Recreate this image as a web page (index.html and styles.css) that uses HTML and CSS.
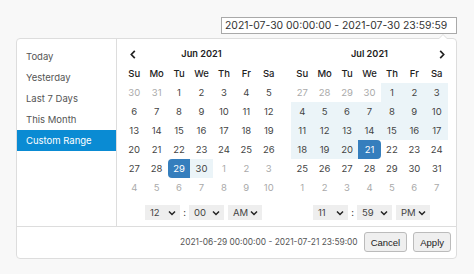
FILE: index.html
```html
<!DOCTYPE html>
<html>
<head>
<meta charset="utf-8">
<link rel="stylesheet" href="styles.css">
</head>
<body>
<div class="page">
  <div class="field-row"><div class="field">2021-07-30 00:00:00 - 2021-07-30 23:59:59</div></div>
  <div class="picker">
    <div class="picker-main">
      <ul class="ranges">
        <li>Today</li>
        <li>Yesterday</li>
        <li>Last 7 Days</li>
        <li>This Month</li>
        <li class="active">Custom Range</li>
      </ul>
      <div class="calendars">
        <div class="cal">
          <table>
            <thead>
              <tr class="month-row">
                <th class="nav prev"><svg width="6" height="9" viewBox="0 0 6 9"><path d="M4.8 0.8 L1.3 4.5 L4.8 8.2" fill="none" stroke="#222" stroke-width="1.7"/></svg></th>
                <th colspan="5" class="month">Jun 2021</th>
                <th></th>
              </tr>
              <tr class="dow"><th>Su</th><th>Mo</th><th>Tu</th><th>We</th><th>Th</th><th>Fr</th><th>Sa</th></tr>
            </thead>
            <tbody>
              <tr><td class="off">30</td><td class="off">31</td><td>1</td><td>2</td><td>3</td><td>4</td><td>5</td></tr>
              <tr><td>6</td><td>7</td><td>8</td><td>9</td><td>10</td><td>11</td><td>12</td></tr>
              <tr><td>13</td><td>14</td><td>15</td><td>16</td><td>17</td><td>18</td><td>19</td></tr>
              <tr><td>20</td><td>21</td><td>22</td><td>23</td><td>24</td><td>25</td><td>26</td></tr>
              <tr><td>27</td><td>28</td><td class="start">29</td><td class="in">30</td><td class="off">1</td><td class="off">2</td><td class="off">3</td></tr>
              <tr><td class="off">4</td><td class="off">5</td><td class="off">6</td><td class="off">7</td><td class="off">8</td><td class="off">9</td><td class="off">10</td></tr>
            </tbody>
          </table>
          <div class="time">
            <div class="sel"><span>12</span><svg width="8" height="6" viewBox="0 0 8 6"><path d="M1 1.5 L4 4.5 L7 1.5" fill="none" stroke="#222" stroke-width="1.5"/></svg></div>
            <span class="colon">:</span>
            <div class="sel"><span>00</span><svg width="8" height="6" viewBox="0 0 8 6"><path d="M1 1.5 L4 4.5 L7 1.5" fill="none" stroke="#222" stroke-width="1.5"/></svg></div>
            <div class="sel ampm"><span>AM</span><svg width="8" height="6" viewBox="0 0 8 6"><path d="M1 1.5 L4 4.5 L7 1.5" fill="none" stroke="#222" stroke-width="1.5"/></svg></div>
          </div>
        </div>
        <div class="cal">
          <table>
            <thead>
              <tr class="month-row">
                <th></th>
                <th colspan="5" class="month">Jul 2021</th>
                <th class="nav next"><svg width="6" height="9" viewBox="0 0 6 9"><path d="M1.2 0.8 L4.7 4.5 L1.2 8.2" fill="none" stroke="#222" stroke-width="1.7"/></svg></th>
              </tr>
              <tr class="dow"><th>Su</th><th>Mo</th><th>Tu</th><th>We</th><th>Th</th><th>Fr</th><th>Sa</th></tr>
            </thead>
            <tbody>
              <tr><td class="off">27</td><td class="off">28</td><td class="off">29</td><td class="off">30</td><td class="in">1</td><td class="in">2</td><td class="in">3</td></tr>
              <tr><td class="in">4</td><td class="in">5</td><td class="in">6</td><td class="in">7</td><td class="in">8</td><td class="in">9</td><td class="in">10</td></tr>
              <tr><td class="in">11</td><td class="in">12</td><td class="in">13</td><td class="in">14</td><td class="in">15</td><td class="in">16</td><td class="in">17</td></tr>
              <tr><td class="in">18</td><td class="in">19</td><td class="in">20</td><td class="end">21</td><td>22</td><td>23</td><td>24</td></tr>
              <tr><td>25</td><td>26</td><td>27</td><td>28</td><td>29</td><td>30</td><td>31</td></tr>
              <tr><td class="off">1</td><td class="off">2</td><td class="off">3</td><td class="off">4</td><td class="off">5</td><td class="off">6</td><td class="off">7</td></tr>
            </tbody>
          </table>
          <div class="time">
            <div class="sel"><span>11</span><svg width="8" height="6" viewBox="0 0 8 6"><path d="M1 1.5 L4 4.5 L7 1.5" fill="none" stroke="#222" stroke-width="1.5"/></svg></div>
            <span class="colon">:</span>
            <div class="sel"><span>59</span><svg width="8" height="6" viewBox="0 0 8 6"><path d="M1 1.5 L4 4.5 L7 1.5" fill="none" stroke="#222" stroke-width="1.5"/></svg></div>
            <div class="sel ampm"><span>PM</span><svg width="8" height="6" viewBox="0 0 8 6"><path d="M1 1.5 L4 4.5 L7 1.5" fill="none" stroke="#222" stroke-width="1.5"/></svg></div>
          </div>
        </div>
      </div>
    </div>
    <div class="footer">
      <span class="selected">2021-06-29 00:00:00 - 2021-07-21 23:59:00</span>
      <button class="btn">Cancel</button>
      <button class="btn">Apply</button>
    </div>
  </div>
</div>
</body>
</html>
```

FILE: styles.css
```css
* { box-sizing: border-box; }
html, body { margin: 0; padding: 0; }
body {
  background: #f8f8f8;
  font-family: Inter, "Noto Sans", sans-serif;
  color: #333;
  width: 474px;
  height: 274px;
  overflow: hidden;
}
.page {
  padding: 17px 0 0 16px;
}
.field-row {
  display: flex;
  justify-content: flex-end;
  width: 441px;
}
.field {
  width: 236px;
  height: 17px;
  border: 1px solid #a9a9a9;
  background: #fff;
  font-size: 10.4px;
  line-height: 15px;
  padding-left: 3px;
  color: #333;
  white-space: nowrap;
  overflow: hidden;
}
.picker {
  position: relative;
  margin-top: 4px;
  width: 441px;
  height: 221px;
  background: #fff;
  border: 1px solid #ddd;
  border-radius: 4px;
}
.picker::before {
  content: "";
  position: absolute;
  top: -5px;
  right: 8px;
  border-left: 5px solid transparent;
  border-right: 5px solid transparent;
  border-bottom: 5px solid #ddd;
}
.picker::after {
  content: "";
  position: absolute;
  top: -4px;
  right: 9px;
  border-left: 4px solid transparent;
  border-right: 4px solid transparent;
  border-bottom: 4px solid #fff;
}
.picker-main {
  display: flex;
  height: 188px;
  border-bottom: 1px solid #ddd;
}
.ranges {
  list-style: none;
  margin: 0;
  padding: 7px 0 0 0;
  width: 100px;
  border-right: 1px solid #ddd;
  font-size: 9.5px;
  color: #555;
}
.ranges li {
  height: 21px;
  line-height: 21px;
  padding-left: 9px;
}
.ranges li.active {
  background: #0a8bd3;
  color: #fff;
}
.calendars {
  display: flex;
  gap: 11px;
  padding: 5px 8px 0 6px;
}
.cal {
  width: 157px;
}
table {
  width: 157px;
  border-collapse: collapse;
  border-spacing: 0;
  table-layout: fixed;
  font-size: 9.5px;
}
th, td {
  padding: 0;
  text-align: center;
  height: 19px;
  line-height: 19px;
}
.month-row th {
  height: 20px;
  line-height: 20px;
}
.month {
  font-weight: 600;
  color: #222;
  font-size: 9.2px;
}
.nav svg { display: block; }
.nav.prev svg { margin-left: 7px; }
.nav.next svg { margin-left: 13px; }
.dow th {
  font-weight: 500;
  color: #222;
}
td { color: #444; }
td.off { color: #aaa; }
td.in { background: #ebf4f8; }
td.start {
  background: #357ebd;
  color: #fff;
  border-radius: 4px 0 0 4px;
}
td.end {
  background: #357ebd;
  color: #fff;
  border-radius: 0 4px 4px 0;
}
.time {
  display: flex;
  align-items: center;
  justify-content: center;
  margin-top: 8px;
  padding-left: 4px;
  font-size: 9.5px;
}
.sel {
  width: 35px;
  height: 15px;
  background: #eee;
  display: flex;
  align-items: center;
  justify-content: space-between;
  padding: 0 4px 0 5px;
  color: #444;
}
.sel.ampm {
  width: 34px;
  margin-left: 4px;
}
.colon {
  width: 9px;
  text-align: center;
  color: #444;
}
.footer {
  display: flex;
  align-items: center;
  justify-content: flex-end;
  height: 30px;
  padding-right: 5px;
}
.selected {
  font-size: 8.4px;
  color: #555;
  margin-right: 6px;
}
.btn {
  font-family: "Liberation Sans", Arial, sans-serif;
  font-size: 9.5px;
  height: 20px;
  padding: 0 6px;
  margin: 0 0 0 6px;
  background: #efefef;
  border: 1px solid #bbb;
  border-radius: 3px;
  color: #222;
}
.btn:first-of-type { margin-left: 0; }
```
